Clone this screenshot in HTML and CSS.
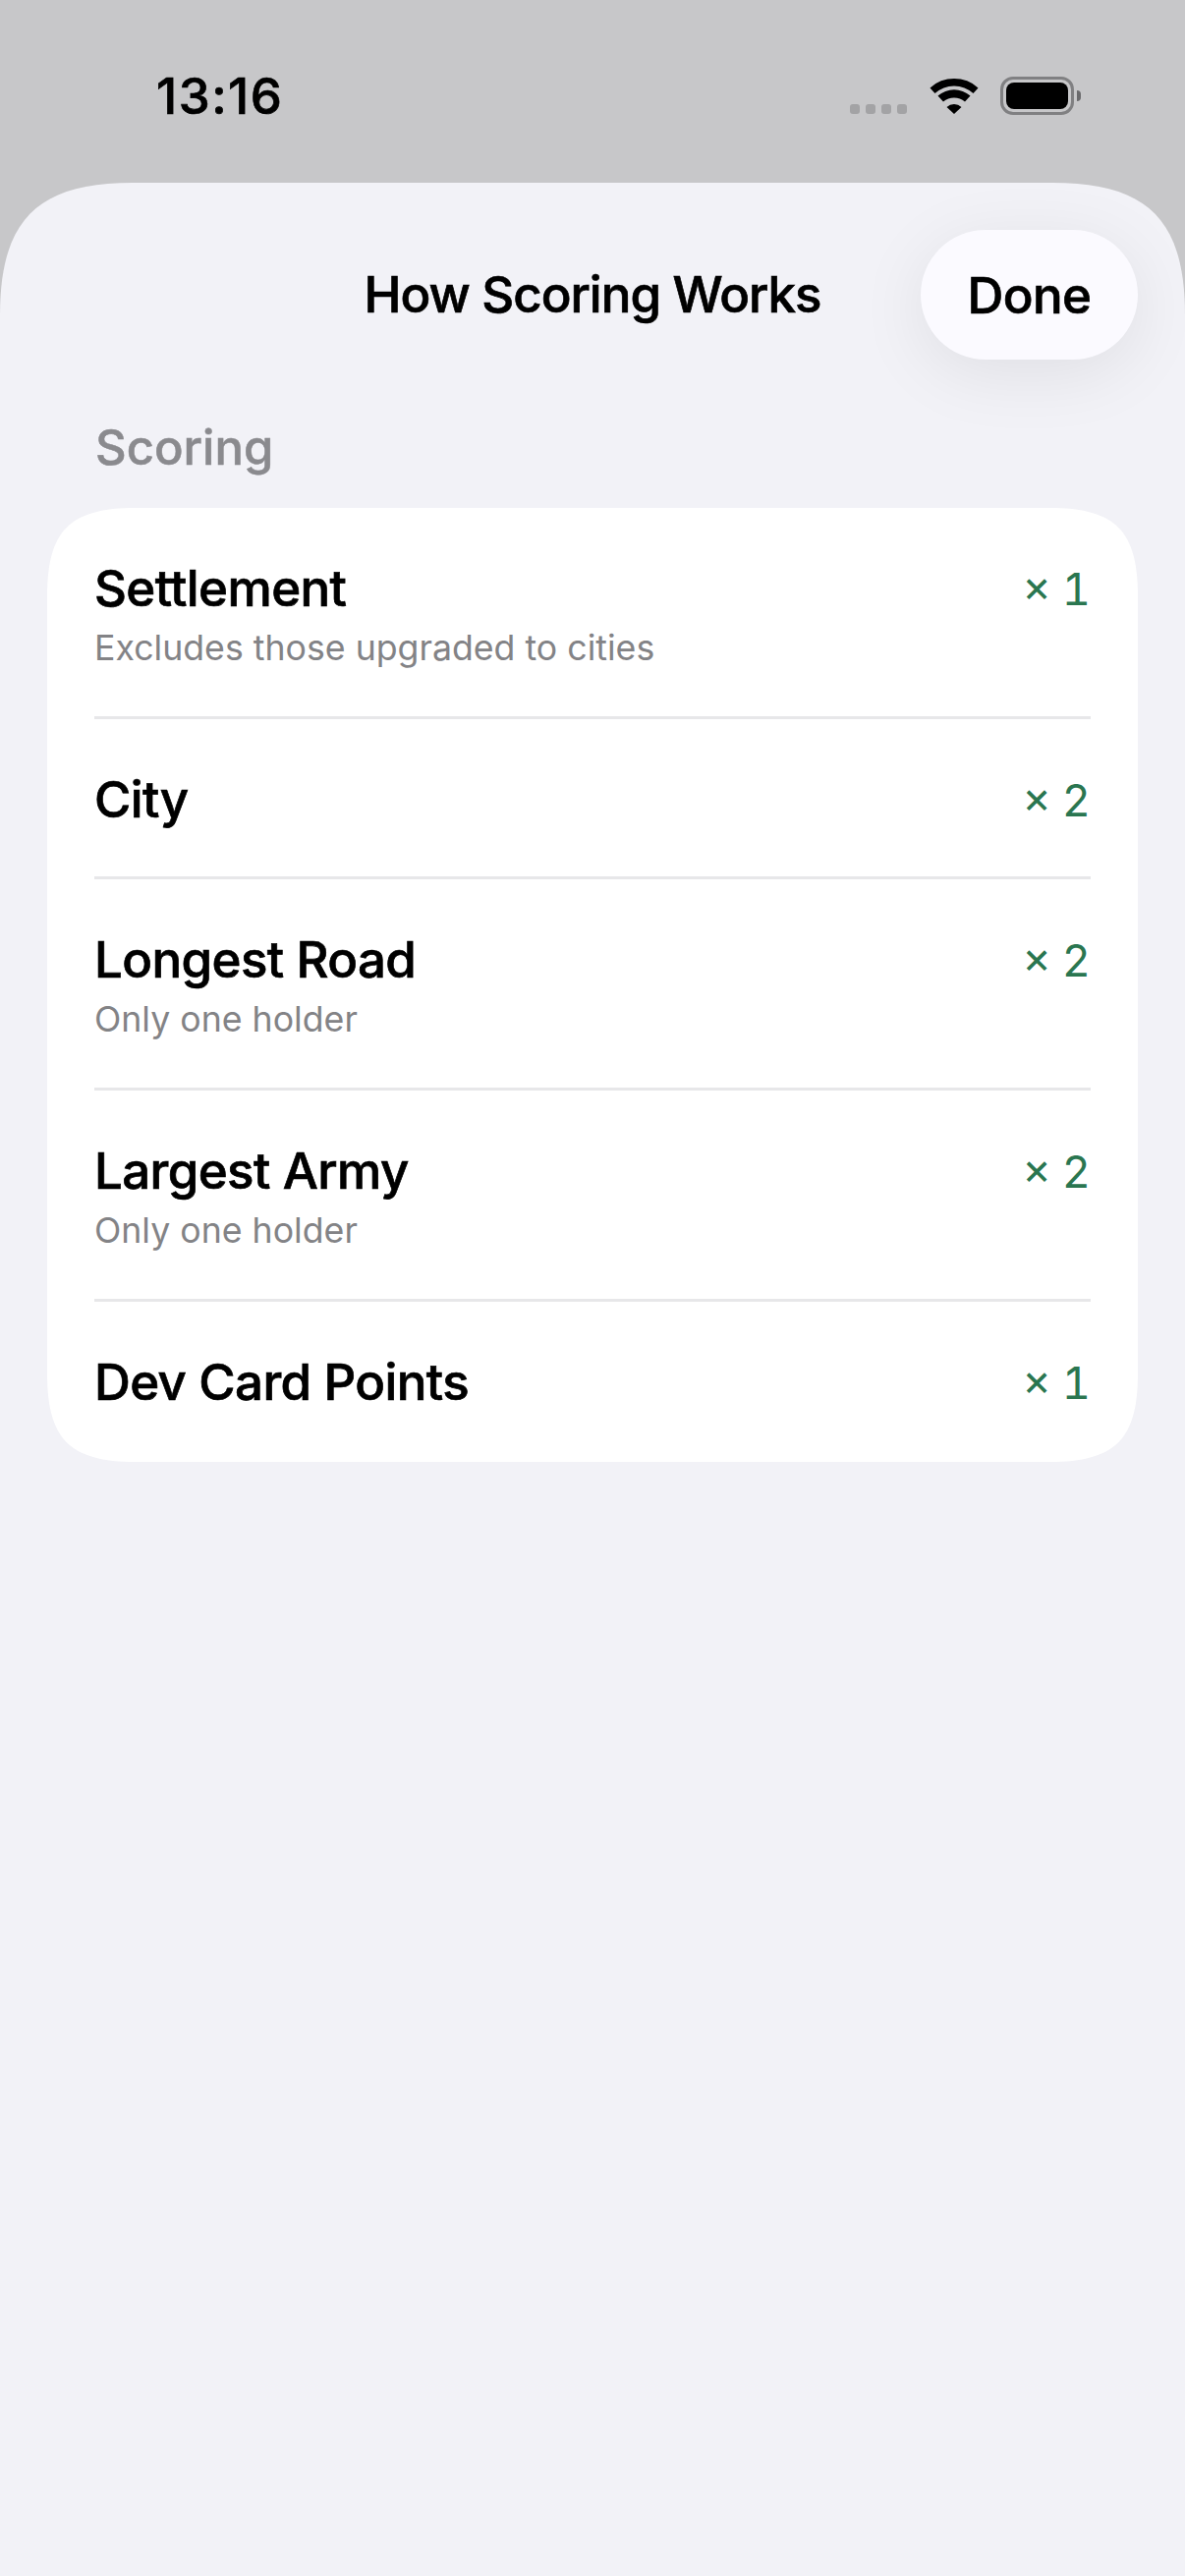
FILE: index.html
```html
<!DOCTYPE html>
<html lang="en">
<head>
<meta charset="utf-8">
<title>How Scoring Works</title>
<link rel="stylesheet" href="styles.css">
</head>
<body>
<div class="screen">
  <header class="status">
    <span class="time">13:16</span>
    <div class="status-icons">
      <div class="signal"><i></i><i></i><i></i><i></i></div>
      <svg class="wifi" width="50" height="38" viewBox="0 0 50 38">
        <path d="M0.500 10.500A36 36 0 0 1 49.500 10.500L44.500 16A29 29 0 0 0 5.500 16Z"/>
        <path d="M8.500 18.500A25 25 0 0 1 41.500 18.500L36 24.500A17 17 0 0 0 14 24.500Z"/>
        <path d="M17.500 30A11 11 0 0 1 32.500 30L25 37Z"/>
      </svg>
      <div class="battery"><div class="battery-fill"></div></div>
      <div class="battery-cap"></div>
    </div>
  </header>
  <main class="sheet">
    <div class="navbar">
      <h1 class="title">How Scoring Works</h1>
      <button class="done">Done</button>
    </div>
    <h2 class="section-label">Scoring</h2>
    <section class="card">
      <div class="row">
        <div class="row-text"><div class="row-title">Settlement</div><div class="row-sub">Excludes those upgraded to cities</div></div>
        <div class="row-value">× 1</div>
      </div>
      <div class="row row-single">
        <div class="row-text"><div class="row-title">City</div></div>
        <div class="row-value">× 2</div>
      </div>
      <div class="row">
        <div class="row-text"><div class="row-title">Longest Road</div><div class="row-sub">Only one holder</div></div>
        <div class="row-value">× 2</div>
      </div>
      <div class="row">
        <div class="row-text"><div class="row-title">Largest Army</div><div class="row-sub">Only one holder</div></div>
        <div class="row-value">× 2</div>
      </div>
      <div class="row row-single row-last">
        <div class="row-text"><div class="row-title">Dev Card Points</div></div>
        <div class="row-value">× 1</div>
      </div>
    </section>
  </main>
</div>
</body>
</html>
```
FILE: styles.css
```css
* { box-sizing: border-box; margin: 0; padding: 0; }
html, body { width: 1206px; height: 2622px; overflow: hidden; }
body { font-family: Inter, "Liberation Sans", sans-serif; background: #c7c7c9; color: #000; }
.screen { width: 1206px; height: 2622px; display: flex; flex-direction: column; }

.status { height: 186px; flex: none; position: relative; padding-left: 159px; display: flex; justify-content: space-between; }
.time { font-size: 51px; font-weight: 500; line-height: 62px; margin-top: 67px; letter-spacing: 1.5px; -webkit-text-stroke: 0.7px #000; }
.status-icons { display: flex; align-items: flex-start; margin-right: 106px; }
.signal { display: flex; gap: 6px; margin-top: 106px; margin-right: 23px; }
.signal i { display: block; width: 10px; height: 10px; border-radius: 3px; background: #a3a3a5; }
.wifi { margin-top: 79px; margin-right: 22px; fill: #000; }
.battery { width: 75px; height: 39px; margin-top: 78px; border: 3px solid #808082; border-radius: 13px; padding: 3px; }
.battery-fill { width: 100%; height: 100%; background: #000; border-radius: 8px; }
.battery-cap { width: 4px; height: 11px; margin-top: 92px; margin-left: 3px; background: #6a6a6c; border-radius: 0 6px 6px 0; }

.sheet { flex: 1; background: #f2f2f7; clip-path: path('M0 135C0 38 38 0 135 0L1071 0C1168 0 1206 38 1206 135L1206 2436L0 2436Z'); padding: 48px 48px 0; }
.navbar { position: relative; height: 132px; display: flex; align-items: center; justify-content: center; }
.title { font-size: 51px; font-weight: 500; letter-spacing: -1px; line-height: 134px; -webkit-text-stroke: 0.7px #000; }
.done { position: absolute; right: 0; top: 0; width: 221px; height: 132px; border: 0; border-radius: 66px; background: #fbfaff; font: 500 51px/134px Inter, "Liberation Sans", sans-serif; letter-spacing: -0.6px; color: #000; -webkit-text-stroke: 0.7px #000; box-shadow: 0 14px 70px rgba(0, 0, 0, 0.08); }
.section-label { font-size: 49px; font-weight: 500; color: #8a8a8e; line-height: 60px; margin: 60px 0 31px 49px; -webkit-text-stroke: 0.5px #8a8a8e; }

.card { background: #fff; clip-path: path('M0 90C0 23 23 0 90 0L1020 0C1087 0 1110 23 1110 90L1110 881C1110 948 1087 971 1020 971L90 971C23 971 0 948 0 881Z'); padding: 0 48px; height: 971px; }
.row { display: flex; justify-content: space-between; align-items: flex-start; height: 215px; padding-top: 51px; border-bottom: 3px solid #e7e7e9; }
.row-single { height: 163px; }
.row-last { border-bottom: 0; }
.row-title { font-size: 51px; font-weight: 500; line-height: 62px; letter-spacing: -0.6px; -webkit-text-stroke: 0.7px #000; }
.row-sub { font-size: 35.700px; font-weight: 400; line-height: 45px; margin-top: 7px; color: #838386; }
.row-value { font-size: 45px; font-weight: 400; line-height: 62px; margin-top: 1px; color: #2a7650; font-variant-numeric: tabular-nums; word-spacing: -1px; }
```
